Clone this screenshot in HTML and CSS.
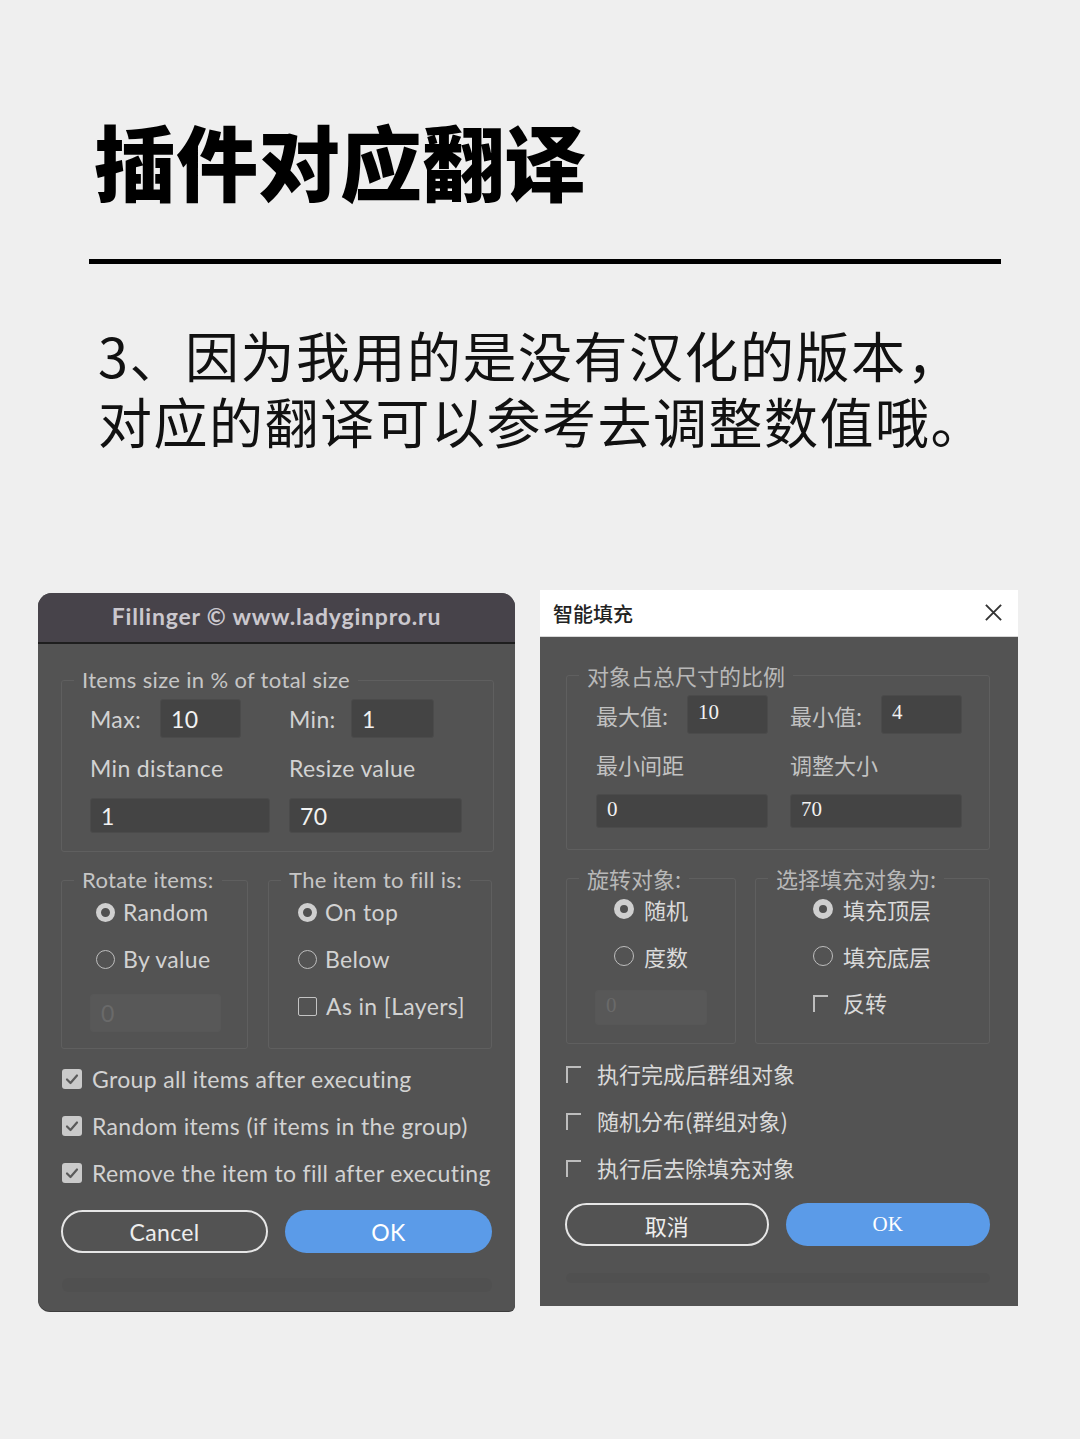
FILE: index.html
```html
<!DOCTYPE html>
<html lang="zh-CN">
<head>
<meta charset="utf-8">
<title>插件对应翻译</title>
<link rel="stylesheet" href="styles.css">
</head>
<body>
<div class="page">
  <h1 class="title">插件对应翻译</h1>
  <div class="rule"></div>
  <div class="desc">
    <p class="desc-line">3、因为我用的是没有汉化的版本，</p>
    <p class="desc-line">对应的翻译可以参考去调整数值哦。</p>
  </div>

  <div class="dialogs">
    <!-- English dialog -->
    <section class="dlg dlg-en">
      <header class="en-bar">Fillinger © www.ladyginpro.ru</header>
      <div class="en-body">
        <fieldset class="grp en-size">
          <legend>Items size in % of total size</legend>
          <div class="en-grid">
            <div class="pair"><span class="lbl en-max">Max:</span><span class="inp en-i1">10</span></div>
            <div class="pair"><span class="lbl en-min">Min:</span><span class="inp en-i2">1</span></div>
            <span class="lbl">Min distance</span>
            <span class="lbl">Resize value</span>
            <span class="inp en-i3">1</span>
            <span class="inp en-i4">70</span>
          </div>
        </fieldset>

        <div class="grp-row en-row">
          <fieldset class="grp en-rot">
            <legend>Rotate items:</legend>
            <div class="gbody en-rot-body">
              <div class="opt en-opt-l1"><span class="radio on"></span>Random</div>
              <div class="opt en-opt-l2"><span class="radio"></span>By value</div>
              <span class="inp dis en-dis">0</span>
            </div>
          </fieldset>
          <fieldset class="grp en-fill">
            <legend>The item to fill is:</legend>
            <div class="gbody en-fill-body">
              <div class="opt"><span class="radio on"></span>On top</div>
              <div class="opt en-opt-r2"><span class="radio"></span>Below</div>
              <div class="opt en-opt-r2"><span class="cbox"></span>As in [Layers]</div>
            </div>
          </fieldset>
        </div>

        <div class="checks en-checks">
          <div class="opt"><span class="cbox checked"><svg viewBox="0 0 20 20" width="20" height="20"><path d="M5 10.5 L8.5 14 L15 6.5" fill="none" stroke="#5a5a5a" stroke-width="2.2" stroke-linecap="round" stroke-linejoin="round"/></svg></span>Group all items after executing</div>
          <div class="opt"><span class="cbox checked"><svg viewBox="0 0 20 20" width="20" height="20"><path d="M5 10.5 L8.5 14 L15 6.5" fill="none" stroke="#5a5a5a" stroke-width="2.2" stroke-linecap="round" stroke-linejoin="round"/></svg></span>Random items (if items in the group)</div>
          <div class="opt"><span class="cbox checked"><svg viewBox="0 0 20 20" width="20" height="20"><path d="M5 10.5 L8.5 14 L15 6.5" fill="none" stroke="#5a5a5a" stroke-width="2.2" stroke-linecap="round" stroke-linejoin="round"/></svg></span>Remove the item to fill after executing</div>
        </div>

        <div class="btns en-btns">
          <div class="btn btn-outline">Cancel</div>
          <div class="btn btn-blue">OK</div>
        </div>
        <div class="band"></div>
      </div>
    </section>

    <!-- Chinese dialog -->
    <section class="dlg dlg-cn">
      <header class="cn-bar">
        <span class="cn-title">智能填充</span>
        <svg class="close" viewBox="0 0 20 20" width="20" height="20"><path d="M2 2 L18 18 M18 2 L2 18" stroke="#333" stroke-width="2" fill="none"/></svg>
      </header>
      <div class="cn-body">
        <fieldset class="grp cn-size">
          <legend>对象占总尺寸的比例</legend>
          <div class="cn-grid">
            <div class="pair"><span class="lbl cn-lab">最大值:</span><span class="inp cn-inp cn-i1">10</span></div>
            <div class="pair"><span class="lbl cn-lab">最小值:</span><span class="inp cn-inp cn-i1">4</span></div>
            <span class="lbl">最小间距</span>
            <span class="lbl">调整大小</span>
            <span class="inp cn-inp cn-i3">0</span>
            <span class="inp cn-inp cn-i3">70</span>
          </div>
        </fieldset>

        <div class="grp-row cn-row">
          <fieldset class="grp cn-rot">
            <legend>旋转对象:</legend>
            <div class="gbody cn-rot-body">
              <div class="opt"><span class="radio on"></span>随机</div>
              <div class="opt cn-opt2"><span class="radio"></span>度数</div>
              <span class="inp cn-inp dis cn-dis">0</span>
            </div>
          </fieldset>
          <fieldset class="grp cn-fill">
            <legend>选择填充对象为:</legend>
            <div class="gbody cn-fill-body">
              <div class="opt"><span class="radio on"></span>填充顶层</div>
              <div class="opt cn-opt2"><span class="radio"></span>填充底层</div>
              <div class="opt cn-opt3"><span class="corner"></span>反转</div>
            </div>
          </fieldset>
        </div>

        <div class="checks cn-checks">
          <div class="opt"><span class="corner"></span>执行完成后群组对象</div>
          <div class="opt"><span class="corner"></span>随机分布(群组对象)</div>
          <div class="opt"><span class="corner"></span>执行后去除填充对象</div>
        </div>

        <div class="btns cn-btns">
          <div class="btn btn-outline">取消</div>
          <div class="btn btn-blue cn-ok">OK</div>
        </div>
        <div class="band cn-band"></div>
      </div>
    </section>
  </div>
</div>
</body>
</html>
```

FILE: styles.css
```css
* { box-sizing: border-box; }
html, body { margin: 0; padding: 0; }
body {
  background: #efefef;
  width: 1080px;
  height: 1439px;
  overflow: hidden;
  font-family: "Noto Sans CJK SC", sans-serif;
}
.page { padding-top: 119px; }

.title {
  margin: 0 0 0 94px;
  font-family: "Noto Sans CJK SC", sans-serif;
  font-weight: 900;
  font-size: 82px;
  line-height: 82px;
  color: #000;
}
.rule {
  margin: 58px 0 0 89px;
  width: 912px;
  height: 5px;
  background: #000;
}
.desc {
  margin: 58px 0 0 98px;
  font-family: "Noto Sans CJK SC", sans-serif;
  font-weight: 400;
  font-size: 54px;
  letter-spacing: 1.5px;
  color: #111;
}
.desc-line {
  margin: 0;
  height: 66px;
  line-height: 66px;
  white-space: nowrap;
}

.dialogs {
  display: flex;
  align-items: flex-start;
  margin-top: 136px;
}
.dlg {
  background: #535353;
  overflow: hidden;
}
.dlg-en {
  margin-left: 38px;
  margin-top: 3px;
  width: 477px;
  height: 718px;
  border-radius: 14px 14px 6px 12px;
  font-family: "Lato", "Open Sans", sans-serif;
  color: #d2d2d2;
  box-shadow: 0 1px 0 #3c3c3c;
}
.dlg-cn {
  margin-left: 25px;
  width: 478px;
  height: 716px;
  font-family: "Noto Sans CJK SC", sans-serif;
  color: #dadada;
}

/* shared parts */
.grp {
  margin: 0;
  padding: 0;
  border: 1px solid #5f5f5f;
  border-radius: 3px;
  min-width: 0;
}
.grp legend {
  margin-left: 12px;
  padding: 0 8px;
  line-height: 24px;
  color: #c6c6c6;
  white-space: nowrap;
}
.gbody { display: flex; flex-direction: column; align-items: flex-start; }
.pair { display: flex; align-items: center; }
.lbl { display: flex; align-items: center; white-space: nowrap; }
.inp {
  display: flex;
  align-items: center;
  background: #444;
  border: 1px solid #4b4b4b;
  border-radius: 3px;
  color: #f2f2f2;
  padding-left: 10px;
}
.inp.dis {
  background: #585858;
  border-color: #575757;
  color: #6a6a6a;
}
.grp-row { display: flex; align-items: stretch; }
.opt {
  display: flex;
  align-items: center;
  height: 30px;
  white-space: nowrap;
}
.radio {
  display: inline-block;
  width: 19px;
  height: 19px;
  border-radius: 50%;
  border: 1.5px solid #bdbdbd;
  margin-right: 8px;
  flex: none;
}
.radio.on {
  border: 5.5px solid #cfcfcf;
  background: #505050;
}
.cbox {
  display: inline-block;
  width: 19px;
  height: 19px;
  border: 1.5px solid #c4c4c4;
  border-radius: 2px;
  margin-right: 9px;
  flex: none;
}
.cbox.checked {
  width: 20px;
  height: 20px;
  border: none;
  background: #cacaca;
  border-radius: 3px;
}
.cbox svg { display: block; }
.checks { display: flex; flex-direction: column; gap: 17px; }
.btns { display: flex; gap: 17px; }
.btn {
  height: 43px;
  border-radius: 22px;
  display: flex;
  align-items: center;
  justify-content: center;
}
.btn-outline { border: 2px solid #e6e6e6; color: #ededed; }
.btn-blue { background: #5b9be8; color: #fff; }
.band {
  height: 14px;
  background: rgba(0, 0, 0, 0.035);
  border-radius: 6px;
}

/* English dialog */
.en-bar {
  height: 51px;
  background: #47434a;
  border-bottom: 2px solid #1e1e1e;
  text-align: center;
  font-weight: 700;
  font-size: 23px;
  letter-spacing: 0.8px;
  line-height: 47px;
  color: #cbc8ce;
}
.en-body {
  padding: 24px 21px 0 23px;
  font-size: 23px;
  letter-spacing: 0.35px;
}
.en-body .grp legend { font-size: 22px; }
.en-size { padding: 0 0 18px 0; }
.en-grid {
  margin: 7px 0 0 28px;
  display: grid;
  grid-template-columns: 199px 1fr;
  grid-template-rows: 39px 30px 35px;
  row-gap: 15px;
}
.en-max { width: 70px; }
.en-min { width: 62px; }
.en-i1 { width: 81px; height: 39px; }
.en-i2 { width: 83px; height: 39px; }
.en-i3 { width: 180px; }
.en-i4 { width: 173px; }
.en-row { margin-top: 16px; gap: 20px; }
.en-rot { width: 187px; padding: 5px 0 16px 0; }
.en-fill { width: 224px; padding: 5px 0 16px 0; }
.en-rot-body { padding-left: 28px; }
.en-fill-body { padding-left: 29px; }
.en-opt-l1 { margin-left: 6px; }
.en-opt-l2 { margin-left: 6px; margin-top: 17px; }
.en-opt-r2 { margin-top: 17px; }
.en-dis { width: 131px; height: 38px; margin-top: 20px; }
.en-checks { margin-top: 15px; padding-left: 1px; }
.en-checks .cbox { margin-right: 10px; }
.en-btns { margin-top: 22px; }
.en-btns .btn { width: 207px; }
.en-body .band { margin-top: 25px; width: 430px; margin-left: 1px; }

/* Chinese dialog */
.cn-bar {
  height: 47px;
  background: #fff;
  border-bottom: 1px solid #d8d8d8;
  display: flex;
  align-items: center;
  justify-content: space-between;
  padding: 0 15px 0 13px;
}
.cn-title {
  font-size: 20px;
  font-weight: 500;
  color: #222;
}
.close { width: 19px; height: 19px; margin-top: -2px; }
.cn-body {
  padding: 26px 28px 0 26px;
  font-size: 22px;
}
.cn-body .grp legend { font-size: 22px; color: #b8b8b8; }
.cn-body .lbl { color: #c2c2c2; }
.cn-size { padding: 0 0 21px 0; }
.cn-grid {
  margin: 8px 0 0 29px;
  display: grid;
  grid-template-columns: 194px 1fr;
  grid-template-rows: 39px 30px 34px;
  row-gap: 15px;
}
.cn-lab { width: 91px; }
.cn-inp {
  font-family: "Liberation Serif", "DejaVu Serif", serif;
  font-weight: 400;
  font-size: 21px;
  padding-bottom: 4px;
}
.cn-i1 { width: 81px; height: 39px; }
.cn-i3 { width: 172px; }
.cn-row { margin-top: 16px; gap: 19px; }
.cn-rot { width: 170px; padding: 4px 0 18px 0; }
.cn-fill { width: 235px; padding: 4px 0 18px 0; }
.cn-rot-body { padding-left: 47px; }
.cn-fill-body { padding-left: 57px; }
.cn-body .radio { width: 20px; height: 20px; margin-right: 10px; }
.cn-body .radio.on { border-width: 6px; }
.cn-opt2 { margin-top: 17px; }
.cn-opt3 { margin-top: 16px; }
.cn-dis { width: 112px; height: 35px; margin-top: 19px; margin-left: -19px; }
.corner {
  display: inline-block;
  width: 15px;
  height: 17px;
  border-top: 2px solid #bdbdbd;
  border-left: 2px solid #bdbdbd;
  margin-right: 15px;
  margin-top: 2px;
  flex: none;
}
.cn-checks { margin-top: 14px; }
.cn-checks .corner { margin-right: 16px; }
.cn-btns { margin-top: 21px; margin-left: -1px; }
.cn-btns .btn { width: 205px; }
.cn-ok { font-family: "Liberation Serif", serif; font-size: 21px; width: 206px !important; }
.cn-band { margin-top: 27px; height: 10px; width: 424px; }
```
